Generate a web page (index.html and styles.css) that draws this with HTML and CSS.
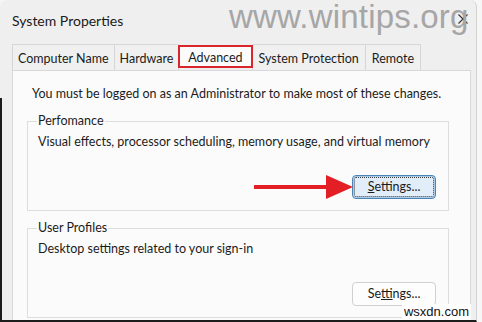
FILE: index.html
```html
<!DOCTYPE html>
<html>
<head>
<meta charset="utf-8">
<link rel="stylesheet" href="styles.css">
</head>
<body>
<div class="window">
  <div class="titlebar">
    <span class="title">System Properties</span>
    <svg class="close" width="10" height="10" viewBox="0 0 10 10"><path d="M0.5 0.5 L9.5 9.5 M9.5 0.5 L0.5 9.5" stroke="#333" stroke-width="1.1" fill="none"/></svg>
    <span class="watermark">www.wintips.org</span>
  </div>
  <div class="tabs">
    <div class="tab">Computer Name</div>
    <div class="tab">Hardware</div>
    <div class="tab active">Advanced</div>
    <div class="tab wide">System Protection</div>
    <div class="tab wide">Remote</div>
  </div>
  <div class="panel">
    <p class="intro">You must be logged on as an Administrator to make most of these changes.</p>
    <fieldset class="group">
      <legend>Perfomance</legend>
      <p class="desc">Visual effects, processor scheduling, memory usage, and virtual memory</p>
      <div class="actions"><button class="btn focused"><u>S</u>ettings...</button></div>
    </fieldset>
    <fieldset class="group users">
      <legend>User Profiles</legend>
      <p class="desc">Desktop settings related to your sign-in</p>
      <div class="actions"><button class="btn">Se<u>t</u>tings...</button></div>
    </fieldset>
  </div>
  <svg class="arrow" width="100" height="26" viewBox="0 0 100 26"><rect x="0" y="11" width="76" height="4" fill="#e31e24"/><polygon points="72,1 99,13 72,25" fill="#e31e24"/></svg>
  <div class="credit">wsxdn.com</div>
</div>
</body>
</html>
```

FILE: styles.css
```css
html, body {
  margin: 0;
  padding: 0;
}
body {
  background: #f6f6f6;
  width: 482px;
  height: 322px;
  overflow: hidden;
  font-family: Lato, "Liberation Sans", sans-serif;
  color: #1b1b1b;
}
.window {
  position: relative;
  box-sizing: border-box;
  width: 477px;
  height: 322px;
  overflow: hidden;
  display: flex;
  flex-direction: column;
  background: linear-gradient(to bottom, transparent 98px, #1c1c1c 98px) left top / 2px 100% no-repeat, #efefef;
  border-right: 1px solid #d2d2d2;
  border-bottom: 2px solid #1c1c1c;
  border-radius: 7px 7px 0 0;
}
.titlebar {
  box-sizing: border-box;
  height: 37px;
  padding: 13px 8px 0 12px;
  display: flex;
  align-items: flex-start;
}
.title {
  font-size: 14px;
  line-height: 16px;
  color: #1a1a1a;
}
.close {
  margin-left: auto;
  margin-top: 1px;
}
.watermark {
  position: absolute;
  left: 229px;
  top: 0;
  font-family: "Liberation Sans", Arial, sans-serif;
  font-size: 33px;
  line-height: 33px;
  color: #a6a6a6;
  letter-spacing: 0.2px;
}
.tabs {
  display: flex;
  align-items: flex-end;
  height: 26px;
  margin-top: 7px;
  padding-left: 12px;
  font-size: 12.5px;
}
.tab {
  box-sizing: border-box;
  height: 26px;
  padding: 2px 5px 0;
  line-height: 23px;
  border: 1px solid #d6d6d6;
  border-bottom: none;
  margin-left: -1px;
  background: #f0f0f0;
  white-space: nowrap;
}
.tab:first-child {
  margin-left: 0;
}
.tab.wide {
  padding: 2px 6px 0;
}
.tab.active {
  align-self: flex-start;
  margin-top: 1px;
  height: 23px;
  padding: 3px 8px 0;
  line-height: 16px;
  border: 2px solid #d9252c;
  background: #fbfbfb;
  position: relative;
  z-index: 1;
}
.panel {
  flex: 1;
  margin: 0 5px 0 12px;
  padding: 15px 21px 0 14px;
  border: 1px solid #d9d9d9;
  border-bottom: none;
  background: #fbfbfb;
  font-size: 12.5px;
}
.intro {
  margin: 0;
  padding-left: 5px;
  line-height: 16px;
  white-space: nowrap;
}
.group {
  margin: 12px 0 0;
  padding: 0 12px 11px 9px;
  border: 1px solid #dedede;
  min-width: 0;
}
.group legend {
  padding: 0 1px;
  line-height: 14px;
  font-size: 12.5px;
}
.users {
  margin-top: 10px;
}
.desc {
  margin: 6px 0 0;
  padding-left: 1px;
  line-height: 16px;
  white-space: nowrap;
}
.actions {
  display: flex;
  justify-content: flex-end;
  margin-top: 25px;
}
.btn {
  box-sizing: border-box;
  width: 84px;
  height: 24px;
  padding: 0 0 1px;
  font-family: Lato, "Liberation Sans", sans-serif;
  font-size: 12.5px;
  color: #1a1a1a;
  background: #fdfdfd;
  border: 1px solid #d0d0d0;
  border-radius: 4px;
}
.btn.focused {
  background: #e1eefa;
  border: 1px solid #4b84b6;
  box-shadow: inset 0 0 0 1px #a9cbe8;
  outline: 1px dotted #3a3a3a;
  outline-offset: -3px;
}
.arrow {
  position: absolute;
  left: 254px;
  top: 174px;
}
.credit {
  position: absolute;
  right: 5px;
  bottom: 0;
  padding: 0 2px;
  background: #ffffff;
  font-family: "Liberation Sans", Arial, sans-serif;
  font-size: 13px;
  line-height: 16px;
  color: #111;
}
```
